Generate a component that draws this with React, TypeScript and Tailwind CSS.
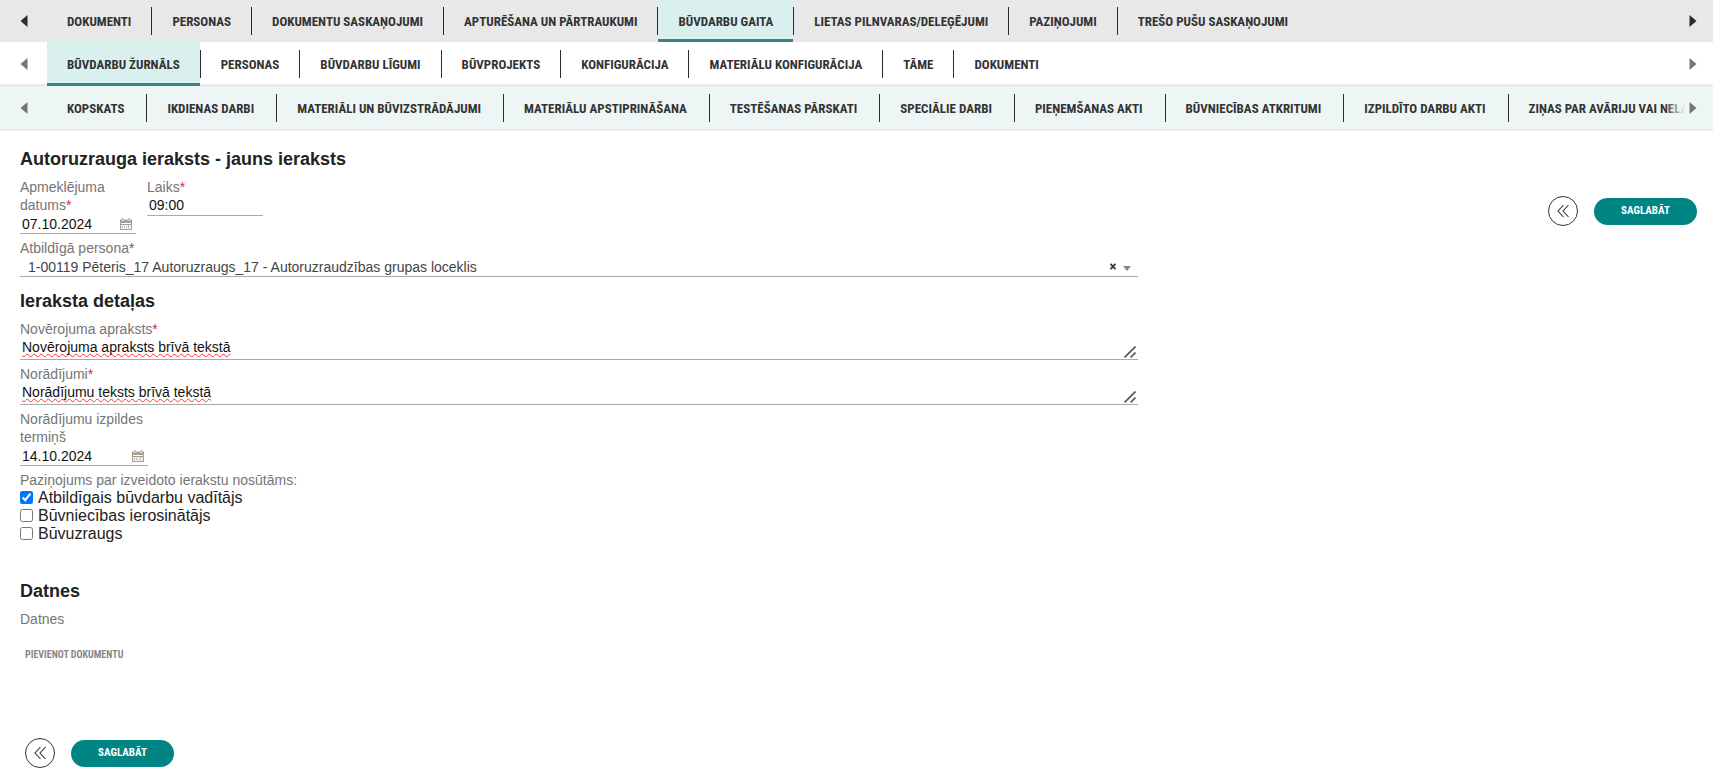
import type { ReactNode } from "react";

type Tab = { label: string; active?: boolean };

const caseTabs: Tab[] = [
  { label: "DOKUMENTI" },
  { label: "PERSONAS" },
  { label: "DOKUMENTU SASKAŅOJUMI" },
  { label: "APTURĒŠANA UN PĀRTRAUKUMI" },
  { label: "BŪVDARBU GAITA", active: true },
  { label: "LIETAS PILNVARAS/DELEĢĒJUMI" },
  { label: "PAZIŅOJUMI" },
  { label: "TREŠO PUŠU SASKAŅOJUMI" },
];

const workTabs: Tab[] = [
  { label: "BŪVDARBU ŽURNĀLS", active: true },
  { label: "PERSONAS" },
  { label: "BŪVDARBU LĪGUMI" },
  { label: "BŪVPROJEKTS" },
  { label: "KONFIGURĀCIJA" },
  { label: "MATERIĀLU KONFIGURĀCIJA" },
  { label: "TĀME" },
  { label: "DOKUMENTI" },
];

const journalTabs: Tab[] = [
  { label: "KOPSKATS" },
  { label: "IKDIENAS DARBI" },
  { label: "MATERIĀLI UN BŪVIZSTRĀDĀJUMI" },
  { label: "MATERIĀLU APSTIPRINĀŠANA" },
  { label: "TESTĒŠANAS PĀRSKATI" },
  { label: "SPECIĀLIE DARBI" },
  { label: "PIEŅEMŠANAS AKTI" },
  { label: "BŪVNIECĪBAS ATKRITUMI" },
  { label: "IZPILDĪTO DARBU AKTI" },
  { label: "ZIŅAS PAR AVĀRIJU VAI NELAIMES GADĪJUMU" },
];

const condensed = "font-['Roboto_Condensed','Liberation_Sans_Narrow','Liberation_Sans',sans-serif]";

function Arrow({ dir, className }: { dir: "left" | "right"; className: string }) {
  return (
    <button
      type="button"
      aria-label={dir === "left" ? "Iepriekšējie" : "Nākamie"}
      className={`flex shrink-0 items-center ${dir === "left" ? "w-[47px] pl-5" : "w-7 justify-end pr-4"} ${className}`}
    >
      <svg width="8" height="12" viewBox="0 0 8 12" fill="currentColor" aria-hidden="true">
        <path d={dir === "left" ? "M7.5 0v12L.5 6z" : "M.5 0v12l7-6z"} />
      </svg>
    </button>
  );
}

function TabBar({ tabs, bar, arrow, pad = "px-5", fade }: { tabs: Tab[]; bar: string; arrow: string; pad?: string; fade?: ReactNode }) {
  return (
    <nav className={`flex items-stretch ${bar}`}>
      <Arrow dir="left" className={arrow} />
      <ul className="relative flex min-w-0 flex-1 overflow-hidden">
        {tabs.map((tab, i) => (
          <li key={tab.label} className="flex shrink-0 items-center">
            {i > 0 && <span className="z-10 h-7 w-px shrink-0 bg-[#2b2b2b]" />}
            <a
              href="#"
              className={`flex h-full items-center border-b-3 pt-1 text-[13px] font-bold whitespace-nowrap text-[#333] ${pad} ${condensed} ${
                tab.active ? "border-b-[#3a8583] bg-[#d9f0ef]" : "border-b-transparent"
              }`}
            >
              {tab.label}
            </a>
          </li>
        ))}
        {fade}
      </ul>
      <Arrow dir="right" className={arrow} />
    </nav>
  );
}

function Label({ htmlFor, required, children }: { htmlFor: string; required?: boolean; children: ReactNode }) {
  return (
    <label htmlFor={htmlFor} className="block leading-[18px] text-[#757575]">
      {children}
      {required && <span className="text-[#d9234e]">*</span>}
    </label>
  );
}

function CalendarIcon() {
  return (
    <svg width="12" height="12" viewBox="0 0 12 12" aria-hidden="true">
      <path d="M0 1.500h12V12H0z" fill="#a89f94" />
      <path d="M2 0h2v2.500H2zM8 0h2v2.500H8z" fill="#a89f94" stroke="#fff" strokeWidth=".5" />
      <path d="M1 5h10v1H1z" fill="#fff" />
      <path d="M1 7h10v4H1z" fill="#f3f1ee" />
      <path d="M2 8h1v2H2zM4 8h1v2H4zM6 9h1v1H6zM8 7h1v3H8z" fill="#bfb8af" />
    </svg>
  );
}

function DateField({ id, value }: { id: string; value: string }) {
  return (
    <div className="flex h-5 items-center border-b border-[#a9a9a9] pr-1">
      <input id={id} defaultValue={value} className="h-[18px] min-w-0 flex-1 px-0.5 leading-[18px] text-[#111] outline-none" />
      <button type="button" aria-label="Izvēlēties datumu">
        <CalendarIcon />
      </button>
    </div>
  );
}

function TextArea({ id, value }: { id: string; value: string }) {
  return (
    <div className="relative flex h-[22px] border-b border-[#a9a9a9]">
      <textarea
        id={id}
        rows={1}
        defaultValue={value}
        className="h-[21px] flex-1 resize-none overflow-hidden px-0.5 leading-[18px] text-[#111] underline decoration-[#f33] decoration-wavy decoration-1 underline-offset-1 outline-none [text-decoration-skip-ink:none]"
      />
      <svg className="absolute right-0.5 bottom-px" width="12" height="12" viewBox="0 0 12 12" stroke="#555" strokeWidth="1.6" aria-hidden="true">
        <path d="M.5 11.500L11.500.5M6.500 11.500l5-5" />
      </svg>
    </div>
  );
}

function Check({ id, label, checked }: { id: string; label: string; checked?: boolean }) {
  return (
    <div className="flex h-[18px] items-center gap-[5px]">
      <input id={id} type="checkbox" defaultChecked={checked} className="mb-0.5 size-[13px]" />
      <label htmlFor={id} className="text-[16px] leading-[18px]">
        {label}
      </label>
    </div>
  );
}

function Actions({ className }: { className: string }) {
  return (
    <div className={`flex items-center gap-4 ${className}`}>
      <button type="button" aria-label="Atpakaļ" className="flex size-[30px] items-center justify-center rounded-full border border-[#333] text-[#333]">
        <svg width="13" height="14" viewBox="0 0 13 14" fill="none" stroke="currentColor" strokeWidth="1.1" aria-hidden="true">
          <path d="M6.500 1L1 7l5.500 6M11.500 1L6 7l5.500 6" />
        </svg>
      </button>
      <button type="button" className={`h-[27px] w-[103px] rounded-full bg-[#008584] text-[11px] font-bold text-white ${condensed}`}>
        SAGLABĀT
      </button>
    </div>
  );
}

function Heading({ children }: { children: ReactNode }) {
  return <h2 className="mb-[7px] text-[18px] leading-6 font-bold">{children}</h2>;
}

export default function App() {
  return (
    <div className="min-h-screen bg-white font-['Liberation_Sans',Arial,sans-serif] text-[14px] text-[#222]">
      <header>
        <TabBar tabs={caseTabs} bar="h-[42px] bg-[#e8e8e8]" arrow="text-[#2b2b2b]" />
        <TabBar tabs={workTabs} bar="h-11 bg-white" arrow="text-[#757575]" />
        <TabBar
          tabs={journalTabs}
          bar="h-[43px] bg-[#edf6f5] pt-px shadow-[0_0_3px_rgba(0,0,0,0.3)]"
          arrow="text-[#757575]"
          pad="pr-[22px] pl-5"
          fade={<span className="absolute inset-y-0 right-0 z-20 w-5 bg-linear-to-r from-transparent to-[#edf6f5]" />}
        />
      </header>

      <main className="flex flex-col pt-[18px] pr-4 pl-5">
        <div className="flex items-start justify-between">
          <form className="w-2/3">
            <Heading>Autoruzrauga ieraksts - jauns ieraksts</Heading>
            <div className="flex items-start gap-[11px]">
              <div className="w-[116px]">
                <Label htmlFor="visit-date" required>
                  Apmeklējuma datums
                </Label>
                <DateField id="visit-date" value="07.10.2024" />
              </div>
              <div className="w-[116px]">
                <Label htmlFor="visit-time" required>
                  Laiks
                </Label>
                <div className="flex h-5 items-start border-b border-[#a9a9a9]">
                  <input id="visit-time" defaultValue="09:00" className="h-[18px] min-w-0 flex-1 px-0.5 leading-[18px] text-[#111] outline-none" />
                </div>
              </div>
            </div>

            <div className="mt-[5px]">
              <Label htmlFor="person" required>
                Atbildīgā persona
              </Label>
              <div className="flex h-5 items-center border-b border-[#a9a9a9] pr-[7px]">
                <select id="person" className="min-w-0 flex-1 appearance-none pl-2 leading-[18px] text-[#444] outline-none">
                  <option>1-00119 Pēteris_17 Autoruzraugs_17 - Autoruzraudzības grupas loceklis</option>
                </select>
                <button type="button" aria-label="Notīrīt" className="mr-[7px] text-[#333]">
                  <svg width="6" height="7" viewBox="0 0 6 7" stroke="currentColor" strokeWidth="1.800" aria-hidden="true">
                    <path d="M.5.800l5 5.400M5.500.800l-5 5.400" />
                  </svg>
                </button>
                <svg className="mt-1" width="8" height="5" viewBox="0 0 8 5" fill="#888" aria-hidden="true">
                  <path d="M0 0h8L4 5z" />
                </svg>
              </div>
            </div>

            <div className="mt-3">
              <Heading>Ieraksta detaļas</Heading>
              <Label htmlFor="observation" required>
                Novērojuma apraksts
              </Label>
              <TextArea id="observation" value="Novērojuma apraksts brīvā tekstā" />
            </div>
            <div className="mt-[5px]">
              <Label htmlFor="instructions" required>
                Norādījumi
              </Label>
              <TextArea id="instructions" value="Norādījumu teksts brīvā tekstā" />
            </div>
            <div className="mt-[5px] w-[128px]">
              <Label htmlFor="deadline">Norādījumu izpildes termiņš</Label>
              <DateField id="deadline" value="14.10.2024" />
            </div>

            <fieldset className="mt-[5px]">
              <legend className="leading-[18px] text-[#757575]">Paziņojums par izveidoto ierakstu nosūtāms:</legend>
              <Check id="manager" label="Atbildīgais būvdarbu vadītājs" checked />
              <Check id="initiator" label="Būvniecības ierosinātājs" />
              <Check id="supervisor" label="Būvuzraugs" />
            </fieldset>

            <div className="mt-9">
              <Heading>Datnes</Heading>
              <p className="leading-[18px] text-[#757575]">Datnes</p>
              <button type="button" className={`mt-[18px] ml-[5px] block text-[10px] leading-[18px] font-bold text-[#888] ${condensed}`}>
                PIEVIENOT DOKUMENTU
              </button>
            </div>
          </form>
          <Actions className="mt-[49px]" />
        </div>
        <Actions className="mt-[74px] ml-[5px]" />
      </main>
    </div>
  );
}
